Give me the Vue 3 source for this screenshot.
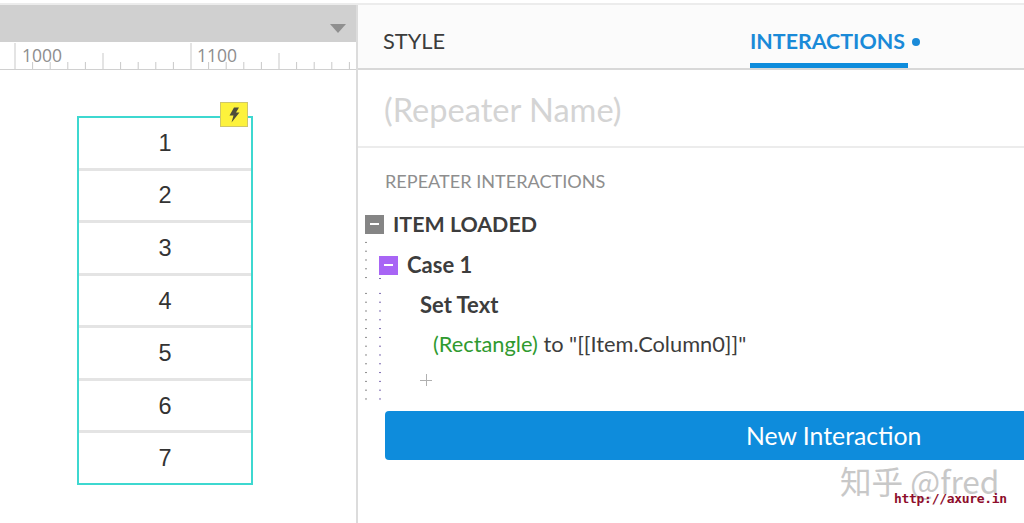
<script setup>
const rows = [1, 2, 3, 4, 5, 6, 7]
const ticks = []
for (let i = 0; i < 21; i++) {
  const x = 15 + i * 17.6
  ticks.push({ x, y: i % 10 === 0 ? 43 : i % 5 === 0 ? 53 : 62 })
}
</script>

<template>
  <div class="page">
    <section class="canvas-pane">
      <div class="grey-bar">
        <svg class="caret" width="16" height="9" viewBox="0 0 16 9"><path d="M0 0H16L8 9Z" fill="#8f8f8f" /></svg>
      </div>
      <div class="ruler">
        <svg class="ruler-svg" width="357" height="28" viewBox="0 42 357 28">
          <line v-for="t in ticks" :key="t.x" :x1="t.x" :x2="t.x" :y1="t.y" y2="69" stroke="#c9c9c9" stroke-width="1" />
        </svg>
        <span class="rule-num first">1000</span>
        <span class="rule-num second">1100</span>
      </div>
      <div class="stage">
        <div class="repeater">
          <div v-for="n in rows" :key="n" class="cell">{{ n }}</div>
          <div class="bolt">
            <svg width="12" height="16" viewBox="0 0 12 16"><path d="M6 0.5H11L8 5.5H11.5L3.5 15.5L5.5 8.5H1.5Z" fill="#4d4d3a" /></svg>
          </div>
        </div>
      </div>
    </section>

    <section class="side">
      <nav class="tabs">
        <span class="tab-style">STYLE</span>
        <span class="tab-int">INTERACTIONS<i class="dot"></i></span>
      </nav>
      <div class="name-row">(Repeater Name)</div>
      <div class="body">
        <div class="section-label">REPEATER INTERACTIONS</div>
        <div class="tree">
          <div class="dots d1"></div>
          <div class="dots d1b"></div>
          <div class="dots d2"></div>
          <div class="dots d2b"></div>
          <div class="line event"><b class="tog grey"></b><strong>ITEM LOADED</strong></div>
          <div class="line case"><b class="tog purple"></b><strong>Case 1</strong></div>
          <div class="line action"><strong>Set Text</strong></div>
          <div class="line target"><em>(Rectangle)</em> to "[[Item.Column0]]"</div>
          <div class="plus"></div>
        </div>
        <button class="new-btn">New Interaction</button>
      </div>
    </section>

    <div class="wm">知乎 @fred</div>
    <div class="url">http://axure.in</div>
  </div>
</template>

<style scoped>
.page {
  position: relative;
  display: flex;
  width: 1024px;
  height: 523px;
  overflow: hidden;
  background: #fff;
  padding-top: 5px;
  box-sizing: border-box;
  font-family: Lato, "Noto Sans", sans-serif;
}
.page::before {
  content: "";
  position: absolute;
  left: 0;
  right: 0;
  top: 3px;
  height: 2px;
  background: #ececec;
}
.canvas-pane {
  width: 358px;
  flex: none;
  box-sizing: border-box;
  border-right: 2px solid #dcdcdc;
  display: flex;
  flex-direction: column;
}
.grey-bar {
  height: 37px;
  background: #d0d0d0;
  display: flex;
  align-items: flex-end;
  justify-content: flex-end;
  padding: 0 10px 9px 0;
  box-sizing: border-box;
}
.ruler {
  position: relative;
  height: 28px;
  border-bottom: 1px solid #d0d0d0;
  box-sizing: border-box;
  flex: none;
}
.ruler-svg {
  position: absolute;
  left: 0;
  top: 0;
}
.rule-num {
  position: absolute;
  top: 3px;
  font: 17.5px/20px "Open Sans", sans-serif;
  color: #8e8e8e;
}
.first { left: 22px; }
.second { left: 197px; }
.stage {
  flex: 1;
  padding: 46px 0 0 77px;
}
.repeater {
  position: relative;
  width: 176px;
  height: 369px;
  box-sizing: border-box;
  border: 2px solid #3ed8d0;
  display: flex;
  flex-direction: column;
  background: #fff;
}
.cell {
  flex: 1;
  display: flex;
  align-items: center;
  justify-content: center;
  padding-top: 1px;
  font: 23.5px "Liberation Sans", sans-serif;
  color: #333;
  border-bottom: 3px solid #e4e4e4;
}
.cell:nth-last-child(2) {
  border-bottom: 0;
}
.bolt {
  position: absolute;
  top: -16px;
  right: 3px;
  width: 28px;
  height: 25px;
  box-sizing: border-box;
  border: 1px solid #cfc76a;
  background: #fdf23c;
  display: flex;
  align-items: center;
  justify-content: center;
}
.side {
  flex: 1;
  display: flex;
  flex-direction: column;
  min-width: 0;
}
.tabs {
  position: relative;
  height: 65px;
  box-sizing: border-box;
  background: #fbfbfb;
  border-bottom: 2px solid #d8d8d8;
  flex: none;
}
.tab-style {
  position: absolute;
  left: 25px;
  top: 23px;
  font-size: 21.8px;
  line-height: 26px;
  color: #3c3c3c;
}
.tab-int {
  position: absolute;
  left: 392px;
  top: 23px;
  width: 158px;
  height: 40px;
  box-sizing: border-box;
  border-bottom: 5px solid #0e8cdc;
  font-size: 21.4px;
  line-height: 26px;
  font-weight: 700;
  color: #1a8ad8;
  white-space: nowrap;
}
.dot {
  display: inline-block;
  width: 8px;
  height: 8px;
  border-radius: 50%;
  background: #1a8ad8;
  margin-left: 7px;
  vertical-align: 3px;
}
.name-row {
  height: 78px;
  box-sizing: border-box;
  border-bottom: 2px solid #ececec;
  padding: 21px 0 0 26px;
  font-size: 32.6px;
  line-height: 38px;
  color: #d4d4d4;
  flex: none;
}
.body {
  padding: 22px 0 0 27px;
}
.section-label {
  font-size: 18.1px;
  line-height: 22px;
  color: #8e8e8e;
}
.tree {
  position: relative;
  margin: 11px 0 0 -20px;
  height: 208px;
}
.dots {
  position: absolute;
  width: 2px;
  background: radial-gradient(circle, #8a8a8a 1px, transparent 1.1px) 0 0 / 2px 8.8px repeat-y;
}
.d1 { left: 0; top: 35px; height: 44px; }
.d1b { left: 0; top: 86px; height: 114px; }
.d2 { left: 14px; top: 71px; height: 9px; background-image: radial-gradient(circle, #7d6cb0 1px, transparent 1.1px); }
.d2b { left: 14px; top: 86px; height: 114px; background-image: radial-gradient(circle, #7d6cb0 1px, transparent 1.1px); }
.line {
  position: absolute;
  display: flex;
  align-items: center;
  color: #3d3d3d;
  font-size: 22px;
  line-height: 26px;
  white-space: nowrap;
}
.event { left: 0; top: 8px; font-size: 21.4px; }
.case { left: 14px; top: 49px; }
.action { left: 55px; top: 89px; }
.target { left: 68px; top: 128px; font-size: 21.8px; white-space: pre; display: block; }
.target em {
  font-style: normal;
  color: #2f9a2f;
}
.tog {
  position: relative;
  width: 19px;
  height: 19px;
  margin-right: 9px;
  flex: none;
}
.tog::after {
  content: "";
  position: absolute;
  left: 5px;
  right: 5px;
  top: 8px;
  height: 2px;
  background: #fff;
}
.grey { background: #858585; }
.purple { background: #a865f5; }
.plus {
  position: absolute;
  left: 55px;
  top: 171px;
  width: 12px;
  height: 12px;
  background:
    linear-gradient(#b0b0b0, #b0b0b0) center / 12px 1px no-repeat,
    linear-gradient(#b0b0b0, #b0b0b0) center / 1px 12px no-repeat;
}
.new-btn {
  display: block;
  width: 900px;
  height: 49px;
  padding: 0;
  border: 0;
  border-radius: 4px;
  background: #0e8cdc;
  color: #fff;
  font-family: inherit;
  font-size: 24.8px;
  text-align: left;
  text-indent: 361px;
}
.wm {
  position: absolute;
  left: 840px;
  top: 461px;
  font: 31.6px/38px "Noto Sans CJK SC", sans-serif;
  color: #c8c8c8;
  white-space: nowrap;
}
.url {
  position: absolute;
  left: 894px;
  top: 489px;
  font: 700 13px/20px "DejaVu Sans Mono", monospace;
  letter-spacing: -0.3px;
  color: #8e0e2c;
  white-space: nowrap;
}
</style>
